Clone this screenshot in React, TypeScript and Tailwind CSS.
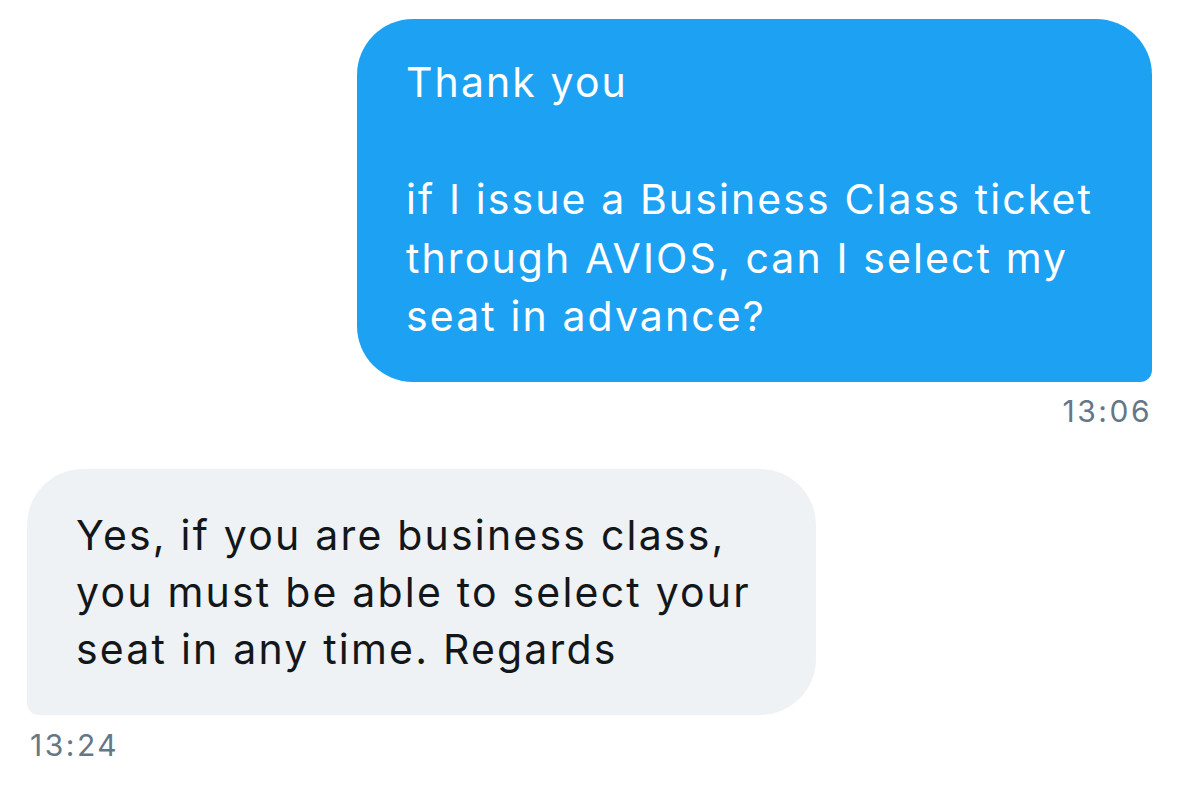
export default function App() {
    return (
        <main
            className="min-h-screen w-[1179px] h-[799px] bg-white overflow-hidden"
            style={{ fontFamily: 'Inter, "Noto Sans", sans-serif' }}
        >
            <div className="flex flex-col pt-[19px]">
                <div className="flex flex-col items-end pr-[27px]">
                    <div className="w-[795px] h-[363px] bg-[#1da1f2] text-white rounded-[56px] rounded-br-[12px] pl-[49px] pt-[34px] text-[41px] leading-[58.5px] tracking-[2.1px] whitespace-nowrap">
                        <p>Thank you</p>
                        <p className="h-[58.5px]" />
                        <p>if I issue a Business Class ticket</p>
                        <p>through AVIOS, can I select my</p>
                        <p>seat in advance?</p>
                    </div>
                    <div className="mt-[11px] text-[30px] leading-[36px] tracking-[2.5px] text-[#657786]">13:06</div>
                </div>
                <div className="flex flex-col items-start pl-[27px] mt-[40px]">
                    <div className="w-[789px] h-[246px] bg-[#eff2f4] text-[#14171a] rounded-[56px] rounded-bl-[12px] pl-[49px] pt-[38px] text-[41px] leading-[57px] tracking-[2.2px] whitespace-nowrap">
                        <p>Yes, if you are business class,</p>
                        <p>you must be able to select your</p>
                        <p>seat in any time. Regards</p>
                    </div>
                    <div className="mt-[12px] pl-[3px] text-[30px] leading-[36px] tracking-[2.5px] text-[#657786]">13:24</div>
                </div>
            </div>
        </main>
    );
}
